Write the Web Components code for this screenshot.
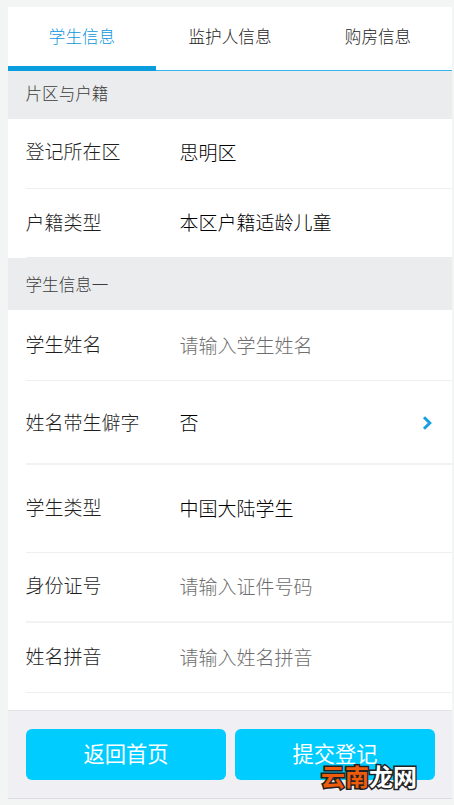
<!DOCTYPE html>
<html lang="zh"><head><meta charset="utf-8">
<style>
html,body{margin:0;height:805px;overflow:hidden;background:#f3f4f4;font-family:"Noto Sans CJK SC","Liberation Sans",sans-serif;font-weight:300}
</style></head><body>
<reg-app>
<reg-tabs slot="tabs">
<reg-tab active>学生信息</reg-tab><reg-tab>监护人信息</reg-tab><reg-tab>购房信息</reg-tab>
</reg-tabs>
<reg-section h="48" pb="4">片区与户籍</reg-section>
<reg-row label="登记所在区" value="思明区" h="70" lo="-1" pb="4"></reg-row>
<reg-row label="户籍类型" value="本区户籍适龄儿童" h="69" last pb="4"></reg-row>
<reg-section h="52" pb="1">学生信息一</reg-section>
<reg-row label="学生姓名" value="请输入学生姓名" ph h="71" lo="-1" pb="2"></reg-row>
<reg-row label="姓名带生僻字" value="否" h="84" arrow thick pb="2"></reg-row>
<reg-row label="学生类型" value="中国大陆学生" h="88" pb="2" lo="-1"></reg-row>
<reg-row label="身份证号" value="请输入证件号码" ph h="70" lo="-1" thick pb="3"></reg-row>
<reg-row label="姓名拼音" value="请输入姓名拼音" ph h="70" lo="-1" pb="3"></reg-row>
<reg-footer slot="footer"><reg-btn>返回首页</reg-btn><reg-btn>提交登记</reg-btn></reg-footer>
</reg-app>
<reg-mark></reg-mark>
<script>
function def(name,css,html,init){
  customElements.define(name,class extends HTMLElement{
    constructor(){super();this.attachShadow({mode:'open'});}
    connectedCallback(){
      this.shadowRoot.innerHTML='<style>'+css+'</style>'+(typeof html==='function'?html(this):html);
      if(init)init(this);
    }
  });
}
def('reg-app',
 ':host{display:flex;flex-direction:column;margin:7px 2px 0 8px;height:792px;background:#fff;border-bottom:1px solid #dcdde0;box-sizing:border-box}'+
 '.body{flex:1;display:flex;flex-direction:column;min-height:0}',
 '<slot name="tabs"></slot><div class="body"><slot></slot></div><slot name="footer"></slot>');
def('reg-tabs',
 ':host{display:flex;align-items:flex-start;height:64px;box-sizing:border-box;border-bottom:1px solid #36b4ec;flex:none}',
 '<slot></slot>');
def('reg-tab',
 ':host{flex:1;display:flex;align-items:center;justify-content:center;height:63px;box-sizing:border-box;padding-bottom:5px;font-size:16.6px;color:#1c1c1c}'+
 ':host([active]){color:#0f96dc;height:64px;border-bottom:5px solid #0a9ddd;padding-bottom:1px}',
 '<slot></slot>');
def('reg-section',
 ':host{display:flex;align-items:center;padding:0 0 4px 17.5px;background:#ebecee;font-size:16.6px;color:#3c3c3c;flex:none;box-sizing:border-box}',
 '<slot></slot>',el=>{el.style.height=el.getAttribute('h')+'px';el.style.paddingBottom=el.getAttribute('pb')+'px'});
def('reg-row',
 ':host{display:block;padding-left:18px;background:#fff;flex:none;box-sizing:border-box}'+
 '.r{display:flex;align-items:center;height:100%;box-sizing:border-box;border-bottom:1px solid #eeeff0;font-size:19px}'+
 ':host([thick]) .r{border-bottom:2px solid #f1f2f3}'+
 ':host([last]) .r{border-bottom-color:#ebecee}'+
 '.l{width:154px;margin-left:-.5px;color:#1e1e1e;flex:none;line-height:1}'+
 '.v{flex:1;color:#000;line-height:1}'+
 '.v.ph{color:#6e6e6e}'+
 'svg{width:12px;height:16px;margin:4px 19px 0 0;flex:none}',
 el=>'<div class="r" style="padding-bottom:'+(el.getAttribute('pb')||0)+'px"><span class="l" style="transform:translateY('+(el.getAttribute('lo')||0)+'px)">'+el.getAttribute('label')+'</span><span class="v'+(el.hasAttribute('ph')?' ph':'')+'">'+el.getAttribute('value')+'</span>'+
 (el.hasAttribute('arrow')?'<svg viewBox="0 0 12 16"><path d="M3 2.2 8.8 8 3 13.8" fill="none" stroke="#1a9fe0" stroke-width="3"/></svg>':'')+'</div>',
 el=>{el.style.height=el.getAttribute('h')+'px'});
def('reg-footer',
 ':host{display:flex;gap:9px;height:88px;padding:18px 17px 0 18px;box-sizing:border-box;background:#efeff4;border-top:1px solid #e4e4e8;flex:none}',
 '<slot></slot>');
def('reg-btn',
 ':host{display:flex;align-items:center;justify-content:center;width:200px;height:51px;padding-bottom:4px;box-sizing:border-box;background:#00ccff;border-radius:6px;color:#fff;font-size:21.3px;font-weight:400}',
 '<slot></slot>');
def('reg-mark',
 ':host{position:absolute;left:321px;top:761px;font-size:24px;font-weight:700;line-height:30px;white-space:nowrap;-webkit-text-stroke:3px #222;paint-order:stroke fill}'+
 '.o{color:#ee5b0a}.w{color:#fff}',
 '<span class="o">云南</span><span class="w">龙网</span>');
</script>
</body></html>
